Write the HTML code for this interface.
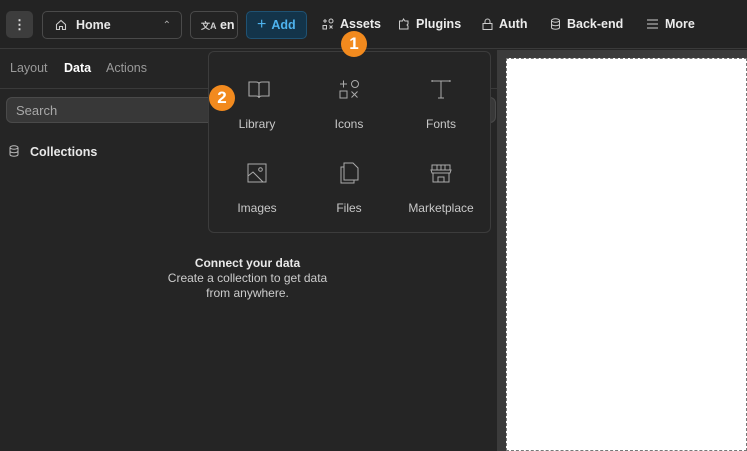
<!DOCTYPE html><html><head><style>
*{box-sizing:border-box;margin:0;padding:0}
body{width:747px;height:451px;overflow:hidden;background:#252525;font-family:"Liberation Sans",sans-serif;color:#e8e8e8;position:relative;font-size:13px}
.top{position:absolute;left:0;top:0;width:747px;height:49px;background:#232323;border-bottom:1px solid #3a3a3a}
.abs{position:absolute}
.btn{position:absolute;top:11px;height:28px;border:1px solid #4a4a4a;border-radius:5px;display:flex;align-items:center}
.nav{position:absolute;top:17px;font-size:12.5px;font-weight:bold;color:#ececec;display:flex;align-items:center;gap:6px}
svg{display:block}
.item{position:absolute;width:92px;text-align:center;color:#c8c8c8;font-size:12px}
.badge{position:absolute;width:26px;height:26px;border-radius:50%;background:#f28a1e;color:#fff;font-weight:bold;font-size:17px;text-align:center;line-height:26px}
</style></head><body>
<div class="top">
<div class="abs" style="left:6px;top:11px;width:27px;height:27px;background:#3d3d3d;border-radius:5px;text-align:center;line-height:27px;font-weight:bold;color:#ddd">⋮</div>
<div class="btn" style="left:42px;width:140px;padding-left:12px"><svg width="12" height="12" viewBox="0 0 12 12" fill="none" stroke="#ccc" stroke-width="1.1"><path d="M1.5 5.5L6 1.5l4.5 4v5h-3v-3h-3v3h-3z"/></svg><span style="margin-left:9px;font-weight:bold;font-size:12.5px">Home</span><span style="margin-left:auto;margin-right:10px;color:#aaa;font-size:10px">⌃</span></div>
<div class="btn" style="left:190px;width:48px;padding-left:10px;font-weight:bold;font-size:12.5px"><span style="font-size:9px;color:#ccc">文A</span>&nbsp;en</div>
<div class="btn" style="left:246px;width:61px;background:#13344a;border-color:#1f5273;color:#4eb3ee;font-weight:bold;padding-left:10px;font-size:12.5px"><span style="font-size:16px;font-weight:normal;margin-right:5px">+</span>Add</div>
<div class="nav" style="left:322px"><svg width="12" height="12" viewBox="0 0 12 12" fill="none" stroke="#ccc"><path d="M1 3h4M3 1v4"/><circle cx="9" cy="3" r="2"/><rect x="1" y="7.5" width="3.5" height="3.5"/><path d="M7.5 7.5l3 3M10.5 7.5l-3 3"/></svg>Assets</div>
<div class="nav" style="left:398px"><svg width="12" height="12" viewBox="0 0 12 12" fill="none" stroke="#ccc"><path d="M1.5 3h3l1-2 1.5 2h3v3l-1 1 1 1v3h-8.5z"/></svg>Plugins</div>
<div class="nav" style="left:482px"><svg width="11" height="12" viewBox="0 0 11 12" fill="none" stroke="#ccc"><rect x="1" y="5.5" width="9" height="6"/><path d="M3 5.5V3.5a2.5 2.5 0 015 0v2"/></svg>Auth</div>
<div class="nav" style="left:550px"><svg width="11" height="12" viewBox="0 0 11 12" fill="none" stroke="#ccc"><ellipse cx="5.5" cy="2.5" rx="4" ry="1.7"/><path d="M1.5 2.5v7c0 1 1.8 1.7 4 1.7s4-.7 4-1.7v-7M1.5 6c0 1 1.8 1.7 4 1.7s4-.7 4-1.7"/></svg>Back-end</div>
<div class="nav" style="left:646px"><svg width="13" height="12" viewBox="0 0 13 12" stroke="#ccc"><path d="M1 2h11M1 6h11M1 10h11"/></svg>More</div>
</div>
<div class="abs" style="left:497px;top:50px;width:250px;height:401px;background:#3b3b3b"></div>
<div class="abs" style="left:506px;top:58px;width:241px;height:393px;background:#fff;border:1px dashed #777"></div>
<div class="abs" style="left:0;top:88px;width:497px;height:1px;background:#3a3a3a"></div>
<div class="abs" style="left:10px;top:61px;color:#9a9a9a;font-size:12.5px">Layout</div>
<div class="abs" style="left:64px;top:61px;color:#fff;font-weight:bold;font-size:12.5px">Data</div>
<div class="abs" style="left:106px;top:61px;color:#9a9a9a;font-size:12.5px">Actions</div>
<div class="abs" style="left:6px;top:97px;width:490px;height:26px;background:#383838;border:1px solid #4a4a4a;border-radius:6px;color:#a8a8a8;padding:5px 9px">Search</div>
<div class="abs" style="left:9px;top:145px"><svg width="10" height="12" viewBox="0 0 10 12" fill="none" stroke="#bbb"><ellipse cx="5" cy="2.5" rx="4" ry="1.7"/><path d="M1 2.5v7c0 1 1.8 1.7 4 1.7s4-.7 4-1.7v-7M1 6c0 1 1.8 1.7 4 1.7s4-.7 4-1.7"/></svg></div>
<div class="abs" style="left:30px;top:145px;font-weight:bold;font-size:12.5px">Collections</div>
<div class="abs" style="left:0;width:495px;top:256px;text-align:center;font-size:12px;line-height:15px"><b>Connect your data</b><br><span style="color:#ccc">Create a collection to get data<br>from anywhere.</span></div>
<div class="abs" style="left:208px;top:51px;width:283px;height:182px;background:#252525;border:1px solid #3c3c3c;border-radius:6px"></div>
<div class="abs" style="left:248px;top:80px"><svg width="22" height="20" viewBox="0 0 22 20" fill="none" stroke="#aaa" stroke-width="1.1"><path d="M1 2h7c2 0 3 1 3 2v14c0-1-1-2-3-2H1zM21 2h-7c-2 0-3 1-3 2v14c0-1 1-2 3-2h7z"/></svg></div>
<div class="abs" style="left:339px;top:79px"><svg width="22" height="20" viewBox="0 0 22 20" fill="none" stroke="#aaa" stroke-width="1"><path d="M1 5h7M4.5 1.5v7"/><circle cx="16" cy="5" r="3.5"/><rect x="1" y="12" width="7" height="7"/><path d="M12.5 12.5l6 6M18.5 12.5l-6 6"/></svg></div>
<div class="abs" style="left:431px;top:79px"><svg width="20" height="20" viewBox="0 0 20 20" fill="none" stroke="#aaa" stroke-width="1"><path d="M1 2h18M1 1v2M19 1v2M10 2v17M7 19h6"/></svg></div>
<div class="abs" style="left:247px;top:163px"><svg width="20" height="20" viewBox="0 0 20 20" fill="none" stroke="#aaa" stroke-width="1"><rect x="1" y="1" width="18" height="18"/><circle cx="13.5" cy="6.5" r="1.8"/><path d="M1 13l5-4 10 10"/></svg></div>
<div class="abs" style="left:340px;top:162px"><svg width="20" height="22" viewBox="0 0 20 22" fill="none" stroke="#aaa" stroke-width="1"><path d="M4 5H1v16h13v-3M4 1h9l5 5v12H4z"/></svg></div>
<div class="abs" style="left:430px;top:163px"><svg width="22" height="20" viewBox="0 0 22 20" fill="none" stroke="#aaa" stroke-width="1"><path d="M2 7V2h18v5M1 7h20l-1 3H2zM3 10v9h16v-9M8 19v-5h6v5M7 2v5M11 2v5M15 2v5"/></svg></div>
<div class="item" style="left:211px;top:117px">Library</div>
<div class="item" style="left:303px;top:117px">Icons</div>
<div class="item" style="left:395px;top:117px">Fonts</div>
<div class="item" style="left:211px;top:201px">Images</div>
<div class="item" style="left:303px;top:201px">Files</div>
<div class="item" style="left:395px;top:201px">Marketplace</div>
<div class="badge" style="left:341px;top:31px">1</div>
<div class="badge" style="left:209px;top:85px">2</div>
</body></html>
